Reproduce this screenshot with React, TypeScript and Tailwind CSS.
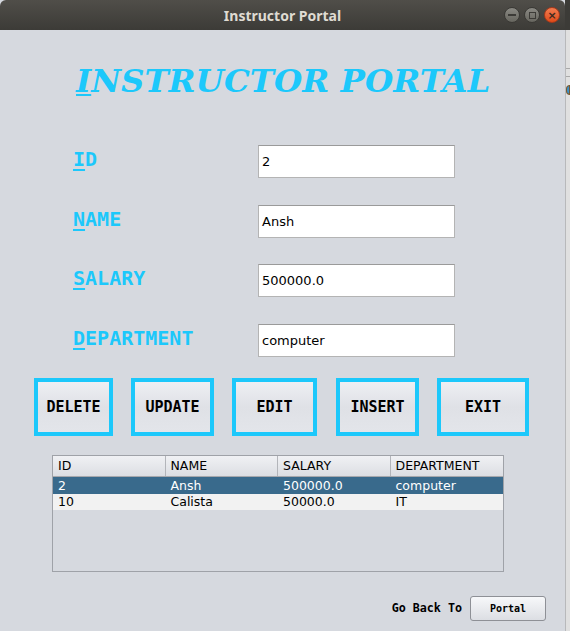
import React from "react";

const CYAN = "text-[#1cc8fb]";

function Label({ first, rest }: { first: string; rest: string }) {
  return (
    <div
      className={`w-[185px] pl-[73px] mb-[6px] ${CYAN} text-[20px] font-bold leading-none`}
      style={{ fontFamily: '"DejaVu Sans Mono", monospace' }}
    >
      <span className="underline decoration-[2px] underline-offset-[3px]">{first}</span>
      {rest}
    </div>
  );
}

function Field({ value }: { value: string }) {
  return (
    <div
      className="ml-[73px] w-[197px] h-[33px] bg-white border border-[#b4b4b4] border-t-[#9a9a9a] flex items-center pl-[3px] text-[13px] text-black"
      style={{ fontFamily: '"DejaVu Sans", sans-serif' }}
    >
      {value}
    </div>
  );
}

function Btn({ label, w }: { label: string; w: string }) {
  return (
    <div
      className={`${w} h-[58px] border-[4px] border-[#1cc8fb] bg-gradient-to-b from-[#eeeff3] via-[#dfe1e6] to-[#e3e5ea] flex items-center justify-center text-[15px] font-bold text-black`}
      style={{ fontFamily: '"DejaVu Sans Mono", monospace' }}
    >
      {label}
    </div>
  );
}

export default function App() {
  const rows = [
    ["2", "Ansh", "500000.0", "computer"],
    ["10", "Calista", "50000.0", "IT"],
  ];
  return (
    <div className="w-[570px] h-[631px] flex overflow-hidden bg-[#d6d9df]">
      <div className="w-[565px] h-full flex flex-col">
        {/* Title bar */}
        <div className="h-[30px] shrink-0 bg-gradient-to-b from-[#504e49] to-[#3c3b37] rounded-t-[6px] relative flex items-center justify-center">
          <span
            className="text-[14px] font-bold text-[#dfdbd2]"
            style={{ fontFamily: '"Noto Sans", "DejaVu Sans", sans-serif' }}
          >
            Instructor Portal
          </span>
          <div className="absolute right-[5px] top-[7px] flex gap-[4px]">
            <div className="w-[16px] h-[16px] rounded-full bg-gradient-to-b from-[#8a8983] to-[#67665f] border border-[#3a3935] flex items-center justify-center">
              <div className="w-[8px] h-[2px] bg-[#3c3b37]" />
            </div>
            <div className="w-[16px] h-[16px] rounded-full bg-gradient-to-b from-[#8a8983] to-[#67665f] border border-[#3a3935] flex items-center justify-center">
              <div className="w-[7px] h-[7px] border border-[#3c3b37]" />
            </div>
            <div className="w-[16px] h-[16px] rounded-full bg-gradient-to-b from-[#f27c4f] to-[#df4a16] border border-[#a8391a] flex items-center justify-center text-[#3c2a20] text-[11px] font-bold leading-none"
              style={{ fontFamily: '"DejaVu Sans", sans-serif' }}>
              ×
            </div>
          </div>
        </div>

        {/* Content */}
        <div className="flex-1 flex flex-col">
          <div
            className={`pl-[76px] pt-[35px] h-[115px] ${CYAN} text-[32.5px] font-bold italic leading-none`}
            style={{ fontFamily: '"DejaVu Serif", serif' }}
          >
            <span className="underline decoration-[2px] underline-offset-[2px]">I</span>NSTRUCTOR PORTAL
          </div>

          <div className="flex flex-col gap-[27px]">
            {[
              ["I", "D", "2"],
              ["N", "AME", "Ansh"],
              ["S", "ALARY", "500000.0"],
              ["D", "EPARTMENT", "computer"],
            ].map(([f, r, v], i) => (
              <div key={i} className={`flex items-center ${i === 2 ? "mt-[-1px]" : ""}`}>
                <Label first={f} rest={r} />
                <Field value={v} />
              </div>
            ))}
          </div>

          <div className="flex gap-[18px] pl-[34px] mt-[21px]">
            <Btn label="DELETE" w="w-[79px]" />
            <Btn label="UPDATE" w="w-[83px]" />
            <Btn label="EDIT" w="w-[85px] mr-[1px]" />
            <Btn label="INSERT" w="w-[83px]" />
            <Btn label="EXIT" w="w-[92px]" />
          </div>

          {/* Table */}
          <div
            className="ml-[52px] mt-[19px] w-[452px] h-[117px] border border-[#9fa2a8] bg-[#d6d9df] text-[12.5px]"
            style={{ fontFamily: '"DejaVu Sans", sans-serif' }}
          >
            <div className="grid grid-cols-4 h-[21px] bg-gradient-to-b from-[#f0f1f4] to-[#dcdee3] border-b border-[#a6a8ad]">
              {["ID", "NAME", "SALARY", "DEPARTMENT"].map((h, i) => (
                <div
                  key={h}
                  className={`pl-[5px] pt-[1px] flex items-center text-black ${i < 3 ? "border-r border-[#b3b5ba]" : ""}`}
                >
                  {h}
                </div>
              ))}
            </div>
            {rows.map((r, ri) => (
              <div
                key={ri}
                className={`grid grid-cols-4 ${ri === 0 ? "h-[17px] bg-[#396a8c] text-white" : "h-[16px] bg-[#f2f2f2] text-black"}`}
              >
                {r.map((c, ci) => (
                  <div key={ci} className="pl-[5px] pt-[1px] flex items-center leading-none">
                    {c}
                  </div>
                ))}
              </div>
            ))}
          </div>

          {/* Bottom */}
          <div className="flex items-center justify-end pr-[19px] mt-[24px] gap-[8px]">
            <span
              className="text-[11.7px] font-bold text-black"
              style={{ fontFamily: '"DejaVu Sans Mono", monospace' }}
            >
              Go Back To
            </span>
            <div
              className="w-[76px] h-[25px] rounded-[3px] border border-[#8e9096] bg-gradient-to-b from-[#f7f8fa] to-[#dcdee3] flex items-center justify-center text-[10px] font-bold text-black"
              style={{ fontFamily: '"DejaVu Sans Mono", monospace' }}
            >
              Portal
            </div>
          </div>
        </div>
      </div>

      {/* Right strip (background window) */}
      <div className="w-[5px] h-full flex flex-col">
        <div className="h-[30px] bg-[#3c3b37]" />
        <div className="flex-1 border-l border-[#b8b9bb] bg-[#e0e0e0] flex flex-col">
          <div className="h-[38px]" />
          <div className="h-[1px] bg-[#a9a9a9]" />
          <div className="h-[7px]" />
          <div className="h-[1px] bg-[#a9a9a9]" />
          <div className="h-[8px]" />
          <div className="w-[4px] h-[10px] rounded-l-full bg-[#3a8fc8] border border-[#7a5a30]" />
        </div>
      </div>
    </div>
  );
}
